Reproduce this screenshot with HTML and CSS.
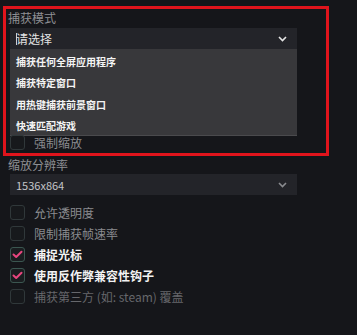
FILE: index.html
```html
<!DOCTYPE html>
<html lang="zh">
<head>
<meta charset="utf-8">
<link rel="stylesheet" href="styles.css">
</head>
<body>
<div class="panel">
  <div class="label">捕获模式</div>
  <div class="select open">
    <span class="value"><span class="caret"></span>请选择</span>
    <svg class="chev" width="9" height="6" viewBox="0 0 9 6"><polyline points="1,1 4.5,4.5 8,1" fill="none" stroke="#e6e6e6" stroke-width="1.6"/></svg>
  </div>
  <div class="list">
    <div class="item">捕获任何全屏应用程序</div>
    <div class="item">捕获特定窗口</div>
    <div class="item">用热键捕获前景窗口</div>
    <div class="item">快速匹配游戏</div>
  </div>
  <div class="row first"><span class="box"></span><span class="text">强制缩放</span></div>
  <div class="label second">缩放分辨率</div>
  <div class="select dim">
    <span class="value">1536x864</span>
    <svg class="chev" width="9" height="6" viewBox="0 0 9 6"><polyline points="1,1 4.5,4.5 8,1" fill="none" stroke="#8a8b8f" stroke-width="1.6"/></svg>
  </div>
  <div class="checks">
    <div class="row"><span class="box"></span><span class="text">允许透明度</span></div>
    <div class="row"><span class="box"></span><span class="text">限制捕获帧速率</span></div>
    <div class="row on"><span class="box"><svg width="11" height="9" viewBox="0 0 11 9"><polyline points="1.5,4.5 4.2,7 9.5,1.8" fill="none" stroke="#e8467f" stroke-width="2" stroke-linecap="round" stroke-linejoin="round"/></svg></span><span class="text">捕捉光标</span></div>
    <div class="row on"><span class="box"><svg width="11" height="9" viewBox="0 0 11 9"><polyline points="1.5,4.5 4.2,7 9.5,1.8" fill="none" stroke="#e8467f" stroke-width="2" stroke-linecap="round" stroke-linejoin="round"/></svg></span><span class="text">使用反作弊兼容性钩子</span></div>
    <div class="row faded"><span class="box"></span><span class="text">捕获第三方 (如: steam) 覆盖</span></div>
  </div>
  <div class="frame"></div>
</div>
</body>
</html>
```
FILE: styles.css
```css
html, body {
  margin: 0;
  padding: 0;
  background: #15161a;
}
body {
  width: 357px;
  height: 335px;
  overflow: hidden;
  font-family: "Noto Sans CJK SC", "Noto Sans", "Liberation Sans", sans-serif;
}
.panel {
  position: relative;
  padding: 9px 0 0 8px;
  width: 289px;
}
.label {
  height: 18px;
  line-height: 18px;
  font-size: 12px;
  color: #8e8f93;
}
.label.second {
  height: 16px;
  line-height: 16px;
  margin-top: 7px;
}
.select {
  margin: 1px 0 0 2px;
  height: 21px;
  background: #232429;
  display: flex;
  align-items: center;
  justify-content: space-between;
  padding: 0 10px 0 6px;
  box-sizing: border-box;
}
.select .value {
  font-size: 12px;
  color: #e4e4e4;
  display: flex;
  align-items: center;
}
.select .caret {
  display: inline-block;
  width: 1px;
  height: 12px;
  background: #cfcfcf;
  margin-right: -1px;
}
.select.dim .value {
  font-size: 11px;
  color: #c4c5c8;
}
.list {
  margin-left: 2px;
  background: #38383b;
  padding-top: 2px;
  height: 87px;
  box-sizing: border-box;
  border-bottom: 1px solid #4a4a4d;
}
.item {
  height: 21.3px;
  line-height: 21.3px;
  padding-left: 6px;
  font-size: 10px;
  font-weight: bold;
  color: #f4f4f4;
}
.row {
  height: 21px;
  display: flex;
  align-items: center;
  margin-left: 2px;
}
.row.first {
  height: 15px;
  margin-top: -1px;
}
.box {
  width: 13px;
  height: 13px;
  border: 1px solid #30383a;
  border-radius: 3px;
  background: #17191c;
  display: flex;
  align-items: center;
  justify-content: center;
  flex: none;
}
.row.on .box {
  border-color: #3b5650;
  background: #1a1d20;
}
.text {
  margin-left: 9px;
  font-size: 12px;
  color: #8a8b8f;
  white-space: nowrap;
}
.row.on .text {
  color: #f2f2f2;
  font-weight: bold;
}
.row.faded .text {
  color: #66676b;
}
.checks {
  margin-top: 7px;
}
.frame {
  position: absolute;
  left: 3px;
  top: 6px;
  width: 326px;
  height: 150px;
  box-sizing: border-box;
  border: 3px solid #e0141c;
  pointer-events: none;
}
```
